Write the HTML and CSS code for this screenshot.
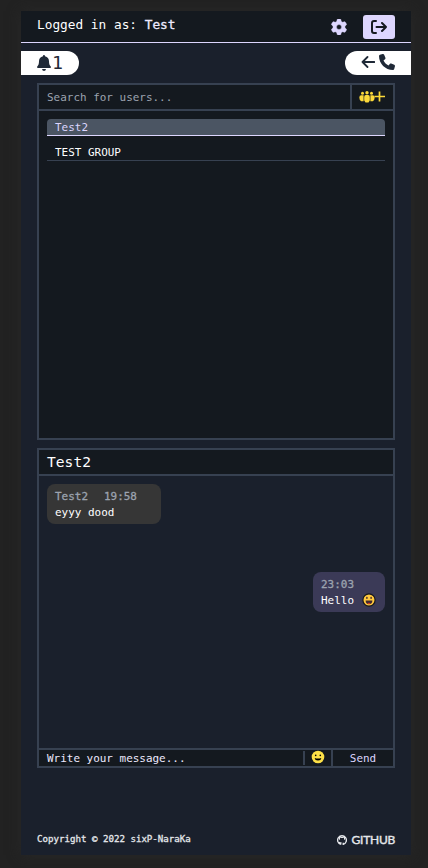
FILE: index.html
```html
<!DOCTYPE html>
<html lang="en">
<head>
<meta charset="utf-8">
<title>Chat</title>
<link rel="stylesheet" href="styles.css">
</head>
<body>
<div class="app">
  <header class="topbar">
    <span>Logged in as: <b>Test</b></span>
    <div class="actions">
      <svg class="gear" viewBox="0 0 512 512"><path d="M495.900 166.600c3.200 8.700.5 18.400-6.400 24.600l-43.300 39.400c1.100 8.300 1.700 16.800 1.700 25.400s-.6 17.100-1.700 25.400l43.300 39.400c6.900 6.200 9.600 15.900 6.400 24.600-4.400 11.900-9.700 23.300-15.800 34.300l-4.700 8.100c-6.600 11-14 21.400-22.100 31.200-5.900 7.200-15.700 9.600-24.500 6.800l-55.700-17.700c-13.400 10.300-28.200 18.900-44 25.400l-12.500 57.100c-2 9.100-9 16.300-18.200 17.800-13.800 2.300-28 3.500-42.500 3.500s-28.700-1.200-42.500-3.500c-9.200-1.500-16.200-8.700-18.200-17.800l-12.500-57.100c-15.800-6.500-30.600-15.100-44-25.400l-55.600 17.800c-8.800 2.800-18.600.3-24.500-6.800-8.100-9.800-15.500-20.200-22.100-31.200l-4.700-8.100c-6.100-11-11.400-22.400-15.800-34.300-3.200-8.700-.5-18.400 6.400-24.600l43.300-39.400C64.600 273.100 64 264.600 64 256s.6-17.100 1.700-25.400l-43.300-39.400c-6.900-6.200-9.600-15.900-6.400-24.600 4.400-11.900 9.700-23.300 15.800-34.300l4.700-8.100c6.600-11 14-21.400 22.100-31.200 5.900-7.200 15.700-9.600 24.500-6.800l55.700 17.700c13.400-10.300 28.200-18.900 44-25.400l12.500-57.100c2-9.100 9-16.300 18.200-17.800C227.300 1.200 241.500 0 256 0s28.700 1.200 42.500 3.500c9.200 1.500 16.200 8.700 18.200 17.800l12.500 57.100c15.800 6.500 30.600 15.100 44 25.400l55.700-17.700c8.800-2.800 18.600-.3 24.500 6.800 8.100 9.800 15.500 20.200 22.100 31.200l4.700 8.100c6.100 11 11.400 22.400 15.800 34.300zM256 336a80 80 0 1 0 0-160 80 80 0 1 0 0 160z"/></svg>
      <span class="logout"><svg viewBox="0 0 16 14"><path d="M5 1H3Q1 1 1 3v8q0 2 2 2h2M5.500 7H15M11 3l4 4-4 4"/></svg></span>
    </div>
  </header>
  <div class="pills">
    <div class="pill bell"><svg viewBox="0 0 14 16"><path d="M7 0Q8 0 8 1.300C10.600 1.800 12 3.700 12 6.300c0 2.900.6 3.900 1.700 5.100.7.800.1 1.600-.7 1.600H1c-.8 0-1.400-.8-.7-1.600C1.400 10.200 2 9.200 2 6.300c0-2.600 1.400-4.500 4-5C6 .3 6.300 0 7 0zM5 14h4q-.3 1.900-2 1.900T5 14z"/></svg><span>1</span></div>
    <div class="pill call"><svg class="back" viewBox="0 0 14 12"><path d="M13.300 6H1.500M6.500 1l-5 5 5 5"/></svg><svg class="phone" viewBox="0 0 512 512"><path d="M164.900 24.600c-7.700-18.600-28-28.500-47.400-23.200l-88 24C12.100 30.200 0 46 0 64c0 247.400 200.600 448 448 448 18 0 33.800-12.100 38.600-29.500l24-88c5.300-19.400-4.600-39.700-23.200-47.400l-96-40c-16.300-6.800-35.200-2.100-46.300 11.600L304.700 368C234.300 334.700 177.300 277.700 144 207.300l49.300-40.400c13.700-11.200 18.400-30 11.600-46.300l-40-96z"/></svg></div>
  </div>
  <main>
    <section class="box users">
      <div class="search"><span class="placeholder">Search for users...</span><span class="addgroup"><svg viewBox="0 0 26 12">
        <circle cx="3.500" cy="2.200" r="1.500"/><circle cx="8" cy="1.700" r="1.700"/><circle cx="12.500" cy="2.200" r="1.500"/>
        <path d="M.3 6.500Q.3 4.200 2.300 4.200h2.300v6H2.200Q.3 9 .3 6.500zM5.200 6q0-1.900 1.600-1.900h2.400q1.600 0 1.600 1.900v3.500L9.500 11.500h-3L5.200 9.500zM11.400 4.200h2.300q2 0 2 2.300T13.800 10.200h-2.400z"/>
        <path class="plus" d="M15.500 5.500h10.500M20.500 .5v10"/></svg></span></div>
      <div class="list">
        <div class="item active">Test2</div>
        <div class="item">TEST GROUP</div>
      </div>
    </section>
    <section class="box chat">
      <div class="title">Test2</div>
      <div class="messages">
        <div class="msg theirs"><div class="meta"><span>Test2</span><span>19:58</span></div><div>eyyy dood</div></div>
        <div class="msg mine"><div class="meta">23:03</div><div class="line">Hello <svg class="grin" viewBox="0 0 14 14"><circle cx="7" cy="7" r="6.100" fill="#ffc83d" stroke="#17181c" stroke-width="1.200"/><path d="M3.600 7.500h6.800Q10.300 11.300 7 11.300T3.600 7.500z" fill="#402a32"/><path d="M5.200 10.300Q7 9 8.800 10.300 7 11.600 5.200 10.300z" fill="#f03a17"/><ellipse cx="4.900" cy="4.900" rx=".8" ry="1.100" fill="#402a32"/><ellipse cx="9.100" cy="4.900" rx=".8" ry="1.100" fill="#402a32"/></svg></div></div>
      </div>
      <div class="compose"><span class="write">Write your message...</span><span class="emoji"><svg viewBox="0 0 14 14"><circle cx="7" cy="7" r="6.300" fill="#fde047"/><circle cx="4.700" cy="5.400" r=".8"/><circle cx="9.300" cy="5.400" r=".8"/><path d="M3.700 8Q7 9 10.300 8 10 10.500 7 10.500T3.700 8z"/></svg></span><span class="send">Send</span></div>
    </section>
  </main>
  <footer><span>Copyright © 2022 sixP-NaraKa</span>
    <span class="github"><svg viewBox="0 0 16 16"><path d="M6 15V12.500Q3.800 13 2.900 11.500M6 15A7 7 0 1 1 10 15V12.500"/><path class="ears" d="M4 7.500V3l2.300 1h3.400L12 3v4.500"/></svg><b>GITHUB</b></span>
  </footer>
</div>
</body>
</html>
```
FILE: styles.css
```css
* { box-sizing: border-box; }
body {
  margin: 0;
  height: 868px;
  overflow: hidden;
  padding: 11px 17px 13px 21px;
  background: #222;
  color: #fff;
  font: 10.960px/16px "DejaVu Sans Mono", monospace;
}
svg { display: block; flex: none; }
.app {
  height: 844px;
  display: flex;
  flex-direction: column;
  background: #1a202c;
  box-shadow: 0 0 12px #282828;
}
.topbar {
  height: 32px;
  flex: none;
  display: flex;
  justify-content: space-between;
  padding: 4px 16px 0;
  background: #14191f;
  border-bottom: 1px solid #ddd6fe;
  font-size: 12.790px;
  line-height: 20px;
}
.topbar b { font-weight: 400; color: #ede9fe; -webkit-text-stroke: .3px #ede9fe; }
.actions { display: flex; align-items: center; gap: 16px; height: 24px; }
.gear { width: 16px; height: 16px; fill: #ddd6fe; stroke: #ddd6fe; stroke-width: 14; }
.logout {
  display: grid;
  place-items: center;
  width: 32px;
  height: 24px;
  border-radius: 3px;
  background: #ddd6fe;
}
.logout svg { width: 16px; height: 14px; fill: none; stroke: #14191f; stroke-width: 2; stroke-linecap: round; stroke-linejoin: round; }
.pills { display: flex; justify-content: space-between; margin-top: 8px; height: 24px; flex: none; }
.pill { display: flex; align-items: center; background: #fff; color: #1f2937; fill: #1f2937; }
.bell { width: 58px; padding-left: 16px; gap: 1px; border-radius: 0 12px 12px 0; font-size: 18.270px; }
.bell svg { width: 14px; height: 16px; margin-top: -1px; }
.call { width: 66px; padding-left: 16px; gap: 4px; border-radius: 12px 0 0 12px; }
.back { width: 14px; height: 12px; margin-top: -2px; fill: none; stroke: #1f2937; stroke-width: 1.800; stroke-linecap: round; stroke-linejoin: round; }
.phone { width: 16px; height: 16px; margin-top: -2px; }
main { padding: 8px 16px 0; display: flex; flex-direction: column; gap: 8px; flex: 1; }
.box { border: 2px solid #374151; display: flex; flex-direction: column; }
.users { height: 357px; background: #14191f; }
.search { height: 26px; display: flex; line-height: 26px; border-bottom: 2px solid #374151; }
.placeholder { flex: 1; padding-left: 8px; color: #9ca3af; }
.addgroup { width: 43px; display: flex; align-items: center; padding-left: 7px; border-left: 2px solid #374151; }
.addgroup svg { width: 26px; height: 12px; fill: #fcd93a; }
.plus { fill: none; stroke: #fcd93a; stroke-width: 1.700; }
.list { padding: 8px; display: flex; flex-direction: column; gap: 8px; }
.item { height: 17px; padding-left: 8px; line-height: 18px; border-bottom: 1px solid #374151; }
.active { background: #4b5563; color: #ddd6fe; border-color: #ddd6fe; border-radius: 4px 4px 0 0; }
.chat { height: 320px; }
.title { height: 26px; padding-left: 8px; background: #14191f; border-bottom: 2px solid #374151; font-size: 14.620px; line-height: 24px; }
.messages { flex: 1; display: flex; flex-direction: column; gap: 48px; padding: 8px; }
.msg { height: 40px; padding: 5px 8px 3px; border-radius: 8px; }
.theirs { width: 114px; background: #363636; }
.mine { width: 72px; align-self: flex-end; background: #3b3a57; }
.meta { display: flex; gap: 16px; color: #9ca3af; -webkit-text-stroke: .3px #9ca3af; }
.line { display: flex; align-items: center; gap: 8px; white-space: nowrap; }
.grin { width: 14px; height: 14px; margin-top: -2px; }
.compose { height: 18px; display: flex; background: #14191f; border-top: 2px solid #374151; line-height: 18px; }
.write { flex: 1; padding-left: 8px; color: #ede9fe; }
.emoji { width: 28px; height: 14px; margin: 1px 0; padding-left: 6px; border-left: 2px solid #374151; }
.emoji svg { width: 14px; height: 14px; margin-top: -1px; }
.send { width: 62px; text-align: center; color: #ddd6fe; border-left: 2px solid #374151; }
footer { height: 24px; display: flex; justify-content: space-between; padding: 0 16px; font-size: 9.140px; color: #e5e7eb; -webkit-text-stroke: .3px #e5e7eb; }
.github { display: flex; align-items: center; height: 18px; gap: 5px; }
.github svg { width: 10px; height: 10px; fill: none; stroke: #e5e7eb; stroke-width: 2.200; }
.github .ears { fill: none; stroke-width: 1.600; }
.github b { font: 400 12px/16px Lato, sans-serif; letter-spacing: -.25px; -webkit-text-stroke: .4px #e5e7eb; }
```
